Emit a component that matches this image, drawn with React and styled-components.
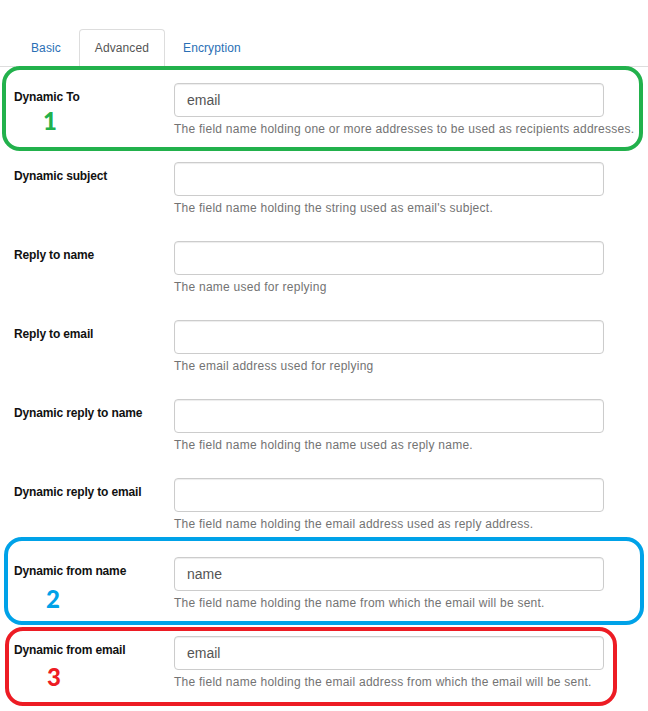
import React from "react";
import styled, { createGlobalStyle } from "styled-components";

const Global = createGlobalStyle`
  html, body { margin: 0; padding: 0; background: #fff; }
  body { font-family: "Liberation Sans", Arial, sans-serif; font-size: 12px; color: #333; }
  * { box-sizing: border-box; }
`;

const Page = styled.div`
  width: 648px;
  height: 711px;
  overflow: hidden;
  padding-top: 29px;
`;

const Tabs = styled.ul`
  list-style: none;
  margin: 0;
  padding: 0 0 0 15px;
  display: flex;
  border-bottom: 1px solid #ddd;
  height: 38px;
`;

const Tab = styled.li`
  margin-right: 2px;
  margin-bottom: -1px;
  padding: 10px 15px;
  line-height: 17px;
  height: 38px;
  font-size: 12px;
  letter-spacing: 0.1px;
  border: 1px solid ${(p) => (p.$active ? "#ddd" : "transparent")};
  border-bottom-color: ${(p) => (p.$active ? "#fff" : "transparent")};
  border-radius: 4px 4px 0 0;
  background: #fff;
  color: ${(p) => (p.$active ? "#555" : "#2a6fb5")};
`;

const Form = styled.div`
  padding: 16px 0 0 14px;
`;

const Row = styled.div`
  position: relative;
  display: grid;
  grid-template-columns: 160px 430px;
  height: 79px;
`;

const LabelCell = styled.div`
  padding-top: 6px;
  display: flex;
  flex-direction: column;
`;

const Label = styled.label`
  font-weight: bold;
  font-size: 12px;
  line-height: 17px;
  letter-spacing: -0.15px;
  color: #111;
`;

const Marker = styled.span`
  font-family: Lato, "Open Sans", sans-serif;
  font-weight: 900;
  font-size: 24px;
  line-height: 24px;
  margin-top: ${(p) => p.$top}px;
  margin-left: ${(p) => p.$left}px;
  color: ${(p) => p.$color};
`;

const FieldCell = styled.div`
  display: flex;
  flex-direction: column;
`;

const Input = styled.div`
  height: 34px;
  border: 1px solid #ccc;
  border-radius: 4px;
  padding: 0 12px;
  display: flex;
  align-items: center;
  font-size: 14px;
  color: #555;
  box-shadow: inset 0 1px 1px rgba(0, 0, 0, 0.075);
`;

const Help = styled.p`
  margin: 4px 0 0;
  font-size: 12px;
  line-height: 17px;
  letter-spacing: 0.25px;
  color: #737373;
  white-space: nowrap;
`;

const Frame = styled.div`
  position: absolute;
  pointer-events: none;
  top: ${(p) => p.$top}px;
  left: ${(p) => p.$left}px;
  width: ${(p) => p.$w}px;
  height: ${(p) => p.$h}px;
  border: 4px solid ${(p) => p.$color};
  border-radius: 18px;
`;

const GREEN = "#22b14c";
const BLUE = "#00a2e8";
const RED = "#ed1c24";

const rows = [
  {
    label: "Dynamic To",
    value: "email",
    help: "The field name holding one or more addresses to be used as recipients addresses.",
    mark: { n: "1", color: GREEN, left: 29, top: 3 },
    frame: { top: -17, left: -12, w: 641, h: 85 },
  },
  { label: "Dynamic subject", value: "", help: "The field name holding the string used as email's subject." },
  { label: "Reply to name", value: "", help: "The name used for replying" },
  { label: "Reply to email", value: "", help: "The email address used for replying" },
  { label: "Dynamic reply to name", value: "", help: "The field name holding the name used as reply name." },
  { label: "Dynamic reply to email", value: "", help: "The field name holding the email address used as reply address." },
  {
    label: "Dynamic from name",
    value: "name",
    help: "The field name holding the name from which the email will be sent.",
    mark: { n: "2", color: BLUE, left: 32, top: 7 },
    frame: { top: -20, left: -10, w: 640, h: 88 },
  },
  {
    label: "Dynamic from email",
    value: "email",
    help: "The field name holding the email address from which the email will be sent.",
    mark: { n: "3", color: RED, left: 33, top: 6 },
    frame: { top: -9, left: -9, w: 612, h: 79 },
  },
];

export default function App() {
  return (
    <Page>
      <Global />
      <Tabs>
        <Tab>Basic</Tab>
        <Tab $active>Advanced</Tab>
        <Tab>Encryption</Tab>
      </Tabs>
      <Form>
        {rows.map((r) => (
          <Row key={r.label}>
            <LabelCell>
              <Label>{r.label}</Label>
              {r.mark && (
                <Marker $color={r.mark.color} $left={r.mark.left} $top={r.mark.top}>
                  {r.mark.n}
                </Marker>
              )}
            </LabelCell>
            <FieldCell>
              <Input>{r.value}</Input>
              <Help>{r.help}</Help>
            </FieldCell>
            {r.frame && (
              <Frame
                $color={r.mark.color}
                $top={r.frame.top}
                $left={r.frame.left}
                $w={r.frame.w}
                $h={r.frame.h}
              />
            )}
          </Row>
        ))}
      </Form>
    </Page>
  );
}
